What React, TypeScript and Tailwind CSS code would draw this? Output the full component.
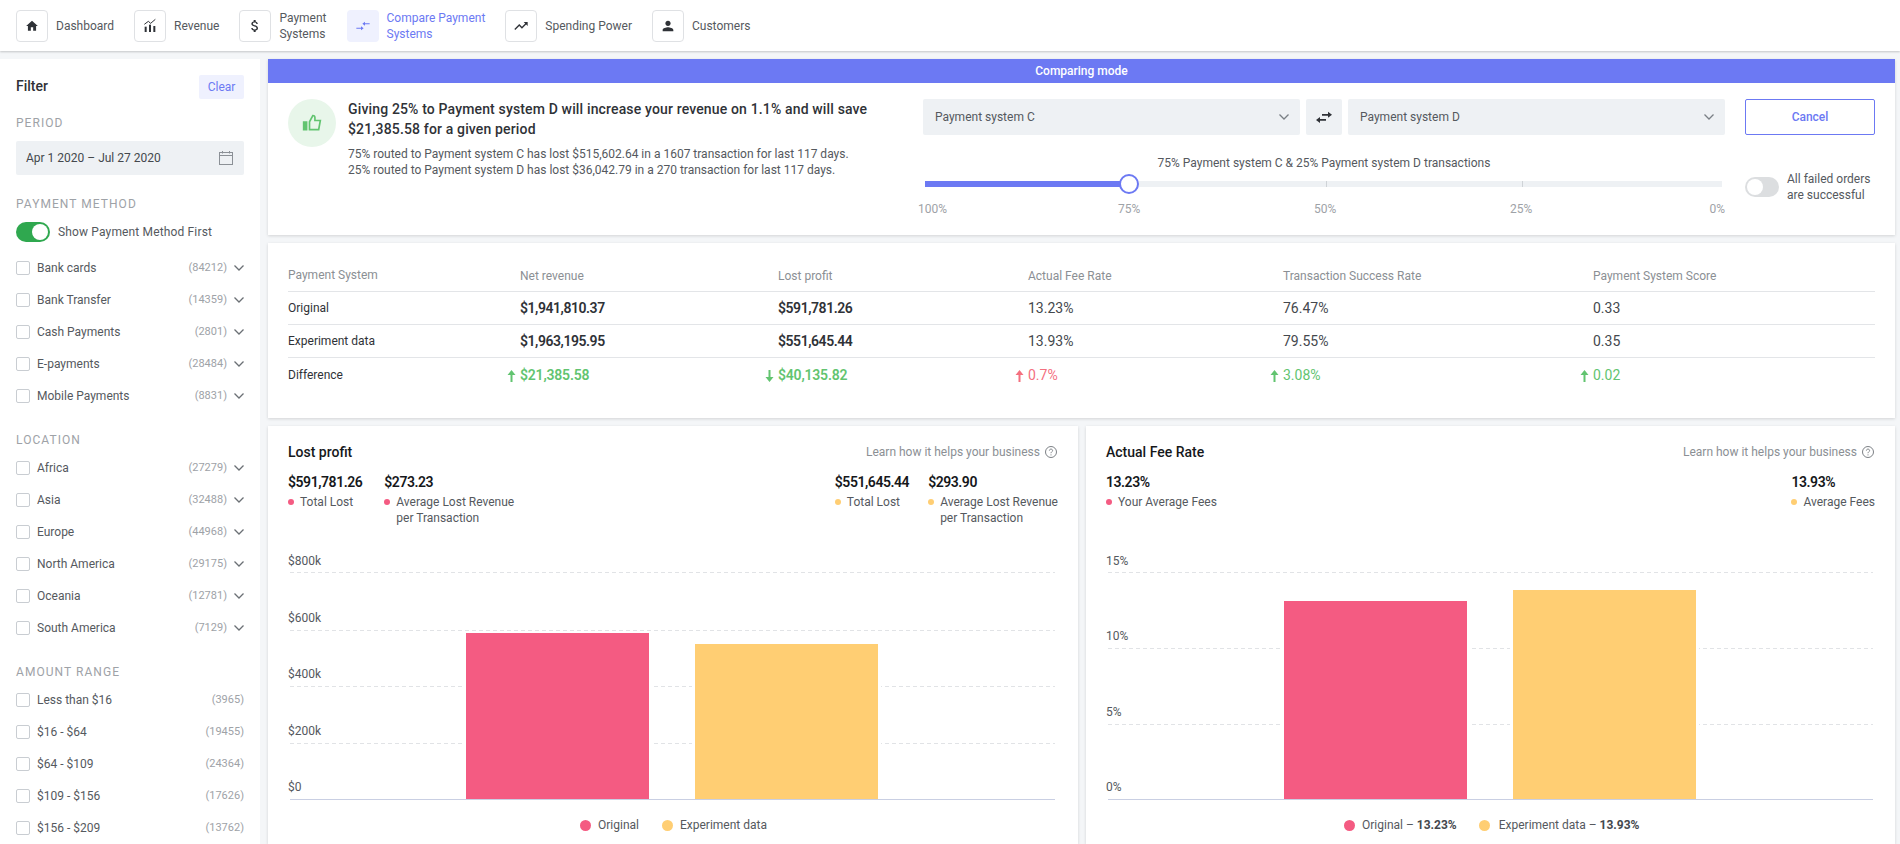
import React from "react";

const F = "[font-family:Roboto,'Liberation_Sans',sans-serif]";
const P = "#f45b82";
const Y = "#ffce73";
const IND = "#6c79f3";

const nav = [
  { t: ["Dashboard"], i: "home" },
  { t: ["Revenue"], i: "rev" },
  { t: ["Payment", "Systems"], i: "dollar" },
  { t: ["Compare Payment", "Systems"], i: "cmp", active: true },
  { t: ["Spending Power"], i: "trend" },
  { t: ["Customers"], i: "user" },
];

function NavIcon({ n }: { n: string }) {
  const c = n === "cmp" ? IND : "#2f3237";
  const size = n === "home" ? 14 : 16;
  return (
    <svg width={size} height={size} viewBox="0 0 24 24" fill={c}>
      {n === "home" && <path d="M10 20v-6h4v6h5v-8h3L12 3 2 12h3v8z" />}
      {n === "rev" && (
        <>
          <rect x="4" y="13" width="3" height="8" />
          <rect x="10.5" y="10" width="3" height="11" />
          <rect x="17" y="12" width="3" height="9" />
          <path d="M3.5 9.5l6-4.5 3.5 3 7-6" fill="none" stroke={c} strokeWidth="1.5" />
        </>
      )}
      {n === "dollar" && (
        <path d="M11.8 10.9c-2.27-.59-3-1.2-3-2.15 0-1.09 1.01-1.85 2.7-1.85 1.78 0 2.44.85 2.5 2.1h2.21c-.07-1.72-1.12-3.3-3.21-3.81V3h-3v2.16c-1.94.42-3.5 1.68-3.5 3.61 0 2.31 1.91 3.46 4.7 4.13 2.5.6 3 1.48 3 2.41 0 .69-.49 1.79-2.7 1.79-2.06 0-2.87-.92-2.98-2.1h-2.2c.12 2.19 1.76 3.42 3.68 3.83V21h3v-2.15c1.95-.37 3.5-1.5 3.5-3.55 0-2.84-2.43-3.81-4.7-4.4z" />
      )}
      {n === "cmp" && <path d="M22 8h-7V5.8L11 8.7l4 2.9V9.5h7zM2 14.5h7v-2.1l4 2.9-4 2.9v-2.2H2z" />}
      {n === "trend" && (
        <path d="M16 6l2.29 2.29-4.88 4.88-4-4L2 16.59 3.41 18l6-6 4 4 6.3-6.29L22 12V6z" />
      )}
      {n === "user" && (
        <path d="M12 12c2.21 0 4-1.79 4-4s-1.79-4-4-4-4 1.79-4 4 1.79 4 4 4zm0 2c-2.67 0-8 1.34-8 4v2h16v-2c0-2.66-5.33-4-8-4z" />
      )}
    </svg>
  );
}

function Chevron({ c = "#6b7075", w = 10 }: { c?: string; w?: number }) {
  return (
    <svg width={w} height="6" viewBox="0 0 10 6" fill="none" stroke={c} strokeWidth="1.3">
      <path d="M0.5 0.5L5 5L9.5 0.5" />
    </svg>
  );
}

function Row({ label, count, chev = true }: { label: string; count: string; chev?: boolean }) {
  return (
    <div className="flex h-8 items-center">
      <span className="h-3.5 w-3.5 shrink-0 rounded-[2px] border border-[#c9cdd2] bg-white" />
      <span className="ml-[7px] flex-1 text-xs text-[#55595e]">{label}</span>
      <span className="text-[11px] text-[#9ea2a7]">{count}</span>
      {chev && (
        <span className="ml-[7px] flex w-2.5 justify-center">
          <Chevron />
        </span>
      )}
    </div>
  );
}

function SecTitle({ children, cls }: { children: React.ReactNode; cls: string }) {
  return <div className={`text-xs leading-4 tracking-[1.05px] text-[#9ea2a7] ${cls}`}>{children}</div>;
}

function Sidebar() {
  return (
    <aside className="flex h-[785px] w-[260px] shrink-0 flex-col overflow-hidden bg-white px-4">
      <div className="mt-4 flex h-6 items-center justify-between">
        <span className="pb-[3px] text-sm font-medium text-[#2f3237]">Filter</span>
        <span className="flex h-6 w-[45px] items-center justify-center rounded-[2px] bg-[#eff1fe] text-xs text-[#6c79f3]">
          Clear
        </span>
      </div>
      <SecTitle cls="mt-4">PERIOD</SecTitle>
      <div className="mt-[10px] flex h-9 items-center justify-between rounded-[2px] bg-[#eef1f4] px-[10px]">
        <span className="text-xs text-[#44484d]">Apr 1 2020 – Jul 27 2020</span>
        <svg width="16" height="16" viewBox="0 0 16 16" fill="none" stroke="#8b9096" strokeWidth="1">
          <rect x="1.5" y="2.5" width="13" height="12" />
          <path d="M1.5 5.5h13M4.5 1v2.5M11.5 1v2.5" />
        </svg>
      </div>
      <SecTitle cls="mt-[21px]">PAYMENT METHOD</SecTitle>
      <div className="mt-[10px] flex h-5 items-center">
        <span className="flex h-5 w-[34px] items-center justify-end rounded-full bg-[#2fa84f] pr-0.5">
          <span className="h-4 w-4 rounded-full bg-white" />
        </span>
        <span className="ml-2 text-xs tracking-[0.15px] text-[#55595e]">Show Payment Method First</span>
      </div>
      <div className="mt-[10px]">
        <Row label="Bank cards" count="(84212)" />
        <Row label="Bank Transfer" count="(14359)" />
        <Row label="Cash Payments" count="(2801)" />
        <Row label="E-payments" count="(28484)" />
        <Row label="Mobile Payments" count="(8831)" />
      </div>
      <SecTitle cls="mt-[20px]">LOCATION</SecTitle>
      <div className="mt-[4px]">
        <Row label="Africa" count="(27279)" />
        <Row label="Asia" count="(32488)" />
        <Row label="Europe" count="(44968)" />
        <Row label="North America" count="(29175)" />
        <Row label="Oceania" count="(12781)" />
        <Row label="South America" count="(7129)" />
      </div>
      <SecTitle cls="mt-[20px]">AMOUNT RANGE</SecTitle>
      <div className="mt-[4px]">
        <Row label="Less than $16" count="(3965)" chev={false} />
        <Row label="$16 - $64" count="(19455)" chev={false} />
        <Row label="$64 - $109" count="(24364)" chev={false} />
        <Row label="$109 - $156" count="(17626)" chev={false} />
        <Row label="$156 - $209" count="(13762)" chev={false} />
      </div>
    </aside>
  );
}

function Select({ label }: { label: string }) {
  return (
    <div className="flex h-9 w-[377px] items-center justify-between rounded-[2px] bg-[#eef1f4] pl-3 pr-[11px]">
      <span className="text-xs text-[#55595e]">{label}</span>
      <Chevron c="#7a7f85" />
    </div>
  );
}

function Compare() {
  return (
    <section className="h-[176px] bg-white shadow-[0_1px_3px_rgba(0,0,0,0.14)]">
      <div className="flex h-6 items-center justify-center bg-[#6c79f3] text-xs font-medium text-white">
        Comparing mode
      </div>
      <div className="flex pl-5 pr-5 pt-4">
        <div className="flex w-[635px] shrink-0">
          <div className="flex h-12 w-12 shrink-0 items-center justify-center rounded-full bg-[#e8f6ea]">
            <svg width="20" height="20" viewBox="0 0 24 24" fill="none" stroke="#62c470" strokeWidth="2">
              <path d="M2 11h3.5v9H2z" fill="#62c470" />
              <path d="M9 20V10.5l4-7.5c1.6 0 2.5 1 2.5 2.5V9H22l-2 11H9z" />
            </svg>
          </div>
          <div className="ml-3">
            <div className="w-[550px] text-sm font-medium leading-5 tracking-[0.15px] text-[#2f3237]">
              Giving 25% to Payment system D will increase your revenue on 1.1% and will save $21,385.58 for a given
              period
            </div>
            <div className="mt-[7px] text-xs leading-4 text-[#55595e]">
              <div>75% routed to Payment system C has lost $515,602.64 in a 1607 transaction for last 117 days.</div>
              <div>25% routed to Payment system D has lost $36,042.79 in a 270 transaction for last 117 days.</div>
            </div>
          </div>
        </div>
        <div className="w-[802px] shrink-0">
          <div className="flex gap-1.5">
            <Select label="Payment system C" />
            <div className="flex h-9 w-9 items-center justify-center rounded-[2px] bg-[#eef1f4]">
              <svg width="16" height="16" viewBox="0 0 16 16" fill="#2f3237">
                <path d="M6 4.9h6V2.8l4 3-4 3V6.7H6z" />
                <path d="M10 10H4V7.9l-4 3 4 3v-2.1h6z" />
              </svg>
            </div>
            <Select label="Payment system D" />
          </div>
          <div className="mt-[20px] text-center text-xs leading-4 text-[#55595e]">
            75% Payment system C &amp; 25% Payment system D transactions
          </div>
          <div className="relative ml-[2px] mt-[10px] h-1.5 w-[797px] bg-[#eef1f4]">
            <div className="h-1.5 w-[204px] bg-[#6c79f3]" />
            <span className="absolute left-[401px] top-0 h-1.5 w-px bg-[#cfd3d7]" />
            <span className="absolute left-[597px] top-0 h-1.5 w-px bg-[#cfd3d7]" />
            <span className="absolute left-[194px] top-[-7px] h-5 w-5 rounded-full border-2 border-[#6c79f3] bg-white" />
          </div>
          <div className="relative mt-[14px] h-4 text-xs leading-4 text-[#9ea2a7]">
            <span className="absolute left-[-5px]">100%</span>
            <span className="absolute left-[195px]">75%</span>
            <span className="absolute left-[391px]">50%</span>
            <span className="absolute left-[587px]">25%</span>
            <span className="absolute right-0">0%</span>
          </div>
        </div>
        <div className="ml-5 w-[130px] shrink-0">
          <div className="flex h-9 w-[130px] items-center justify-center rounded-[2px] border border-[#6c79f3] text-xs font-medium text-[#6c79f3]">
            Cancel
          </div>
          <div className="mt-[36px] flex">
            <span className="mt-[6px] flex h-5 w-[34px] shrink-0 items-center rounded-full bg-[#dcdee0] pl-0.5">
              <span className="h-4 w-4 rounded-full bg-white" />
            </span>
            <span className="ml-2 text-xs leading-4 text-[#55595e]">
              All failed orders
              <br />
              are successful
            </span>
          </div>
        </div>
      </div>
    </section>
  );
}

const cols = [232, 258, 250, 255, 310];

function Arrow({ up, c }: { up: boolean; c: string }) {
  return (
    <svg className="absolute left-[-13px] top-[3px]" width="9" height="12" viewBox="0 0 9 12" fill={c}>
      {up ? <path d="M4.5 0L8.5 5H5.5V12H3.5V5H.5z" /> : <path d="M4.5 12L8.5 7H5.5V0H3.5V7H.5z" />}
    </svg>
  );
}

function TRow({ label, cells, head, border = true }: { label: string; cells: React.ReactNode[]; head?: boolean; border?: boolean }) {
  return (
    <div className={`flex h-[33px] items-center ${border ? "border-b border-[#e3e5e8]" : ""}`}>
      <div className={`w-[232px] shrink-0 text-xs ${head ? "text-[#8b8f94]" : "text-[#2f3237]"}`}>{label}</div>
      {cells.map((c, i) => (
        <div key={i} style={{ width: cols[i + 1] ?? 282 }} className="shrink-0">
          {c}
        </div>
      ))}
    </div>
  );
}

const H = ({ t }: { t: string }) => <span className="text-xs text-[#8b8f94]">{t}</span>;
const B = ({ t }: { t: string }) => <span className="text-sm font-semibold tracking-[-0.45px] text-[#2f3237]">{t}</span>;
const N = ({ t }: { t: string }) => <span className="text-sm text-[#44484d]">{t}</span>;
const D = ({ t, up, c, bold }: { t: string; up: boolean; c: string; bold?: boolean }) => (
  <span className={`relative text-sm ${bold ? "font-semibold tracking-[-0.2px]" : ""}`} style={{ color: c }}>
    <Arrow up={up} c={c} />
    {t}
  </span>
);

function Table() {
  const G = "#62c470";
  return (
    <section className="mt-2 h-[175px] bg-white pl-5 pr-5 pt-4 shadow-[0_1px_3px_rgba(0,0,0,0.14)]">
      <TRow head label="Payment System" cells={[<H t="Net revenue" />, <H t="Lost profit" />, <H t="Actual Fee Rate" />, <H t="Transaction Success Rate" />, <H t="Payment System Score" />]} />
      <TRow label="Original" cells={[<B t="$1,941,810.37" />, <B t="$591,781.26" />, <N t="13.23%" />, <N t="76.47%" />, <N t="0.33" />]} />
      <TRow label="Experiment data" cells={[<B t="$1,963,195.95" />, <B t="$551,645.44" />, <N t="13.93%" />, <N t="79.55%" />, <N t="0.35" />]} />
      <TRow border={false} label="Difference" cells={[<D t="$21,385.58" up c={G} bold />, <D t="$40,135.82" up={false} c={G} bold />, <D t="0.7%" up c="#f4707f" />, <D t="3.08%" up c={G} />, <D t="0.02" up c={G} />]} />
    </section>
  );
}

function Dot({ c }: { c: string }) {
  return <span className="mt-[5px] h-1.5 w-1.5 shrink-0 rounded-full" style={{ background: c }} />;
}

function Stat({ v, label, c }: { v: string; label: React.ReactNode; c: string }) {
  return (
    <div>
      <div className="text-sm font-semibold leading-4 tracking-[-0.45px] text-[#16181b]">{v}</div>
      <div className="mt-1 flex gap-1.5 text-xs leading-4 text-[#55595e]">
        <Dot c={c} />
        <span>{label}</span>
      </div>
    </div>
  );
}

function ChartSvg({ grid, bars, labels }: { grid: number[]; bars: number[]; labels: [string, number][] }) {
  return (
    <svg width="772" height="250" viewBox="0 0 772 250" className="-ml-0.5 block">
      {grid.map((y) => (
        <line key={y} x1="4" x2="769" y1={y + 0.5} y2={y + 0.5} stroke="#e1e3e6" strokeDasharray="4 3" />
      ))}
      <line x1="4" x2="769" y1="247.5" y2="247.5" stroke="#c9cfe3" />
      <rect x="180" y={bars[0]} width="183" height={247 - bars[0]} fill={P} />
      <rect x="409" y={bars[1]} width="183" height={247 - bars[1]} fill={Y} />
      {[180, 409].map((x, i) =>
        grid
          .filter((g) => g > bars[i])
          .map((g) => (
            <g key={`${x}${g}`}>
              <rect x={x - 3} y={g} width="3" height="1" fill="#fff" />
              <rect x={x + 183} y={g} width="3" height="1" fill="#fff" />
            </g>
          ))
      )}
      {labels.map(([t, y]) => (
        <text key={t} x="2" y={y} fontSize="12" fill="#55595e" fontFamily="Roboto, sans-serif">
          {t}
        </text>
      ))}
    </svg>
  );
}

function LegendDot({ c }: { c: string }) {
  return <span className="block h-[11px] w-[11px] rounded-full" style={{ background: c }} />;
}

function Learn() {
  return (
    <span className="flex items-center gap-1 text-xs text-[#8b8f94]">
      Learn how it helps your business
      <svg width="14" height="14" viewBox="0 0 14 14" fill="none" stroke="#7d8186">
        <circle cx="7" cy="7" r="5.5" />
        <path d="M5.4 5.6c0-2 3.2-2 3.2 0 0 1.2-1.6 1.2-1.6 2.6M7 9.4v1" />
      </svg>
    </span>
  );
}

function Card({ title, left, right, chart, legend, w }: { title: string; left: React.ReactNode; right: React.ReactNode; chart: React.ReactNode; legend: React.ReactNode; w: string }) {
  return (
    <section className={`h-[418px] ${w} shrink-0 bg-white px-5 pt-[18px] shadow-[0_1px_3px_rgba(0,0,0,0.14)]`}>
      <div className="flex h-4 items-center justify-between">
        <span className="text-sm font-medium text-[#16181b]">{title}</span>
        <Learn />
      </div>
      <div className="mt-[14px] flex h-[78px] justify-between">
        {left}
        {right}
      </div>
      {chart}
      {legend}
    </section>
  );
}

export default function App() {
  return (
    <div className={`h-[844px] w-[1900px] overflow-hidden bg-[#f4f6f8] ${F}`}>
      <header className="flex h-[51px] items-center gap-5 bg-white px-4 shadow-[0_1px_2px_rgba(0,0,0,0.2)]">
        {nav.map((n) => (
          <div key={n.t[0]} className="flex items-center gap-2">
            <span
              className={`flex h-8 w-8 items-center justify-center rounded ${
                n.active ? "bg-[#eff1fe]" : "border border-[#dfe1e4] bg-white"
              }`}
            >
              <NavIcon n={n.i} />
            </span>
            <span className={`text-xs leading-4 ${n.active ? "text-[#6c79f3]" : "text-[#55595e]"}`}>
              {n.t.map((l) => (
                <div key={l}>{l}</div>
              ))}
            </span>
          </div>
        ))}
      </header>
      <div className="mt-2 flex gap-2">
        <Sidebar />
        <main className="w-[1627px] shrink-0">
          <Compare />
          <Table />
          <div className="mt-2 flex gap-2">
            <Card
              w="w-[810px]"
              title="Lost profit"
              left={
                <div className="flex gap-[22px]">
                  <Stat v="$591,781.26" c={P} label="Total Lost" />
                  <Stat v="$273.23" c={P} label={<>Average Lost Revenue<br />per Transaction</>} />
                </div>
              }
              right={
                <div className="flex gap-[19px]">
                  <Stat v="$551,645.44" c={Y} label="Total Lost" />
                  <Stat v="$293.90" c={Y} label={<>Average Lost Revenue<br />per Transaction</>} />
                </div>
              }
              chart={
                <ChartSvg
                  grid={[20, 78, 134, 191]}
                  bars={[81, 92]}
                  labels={[["$800k", 13], ["$600k", 70], ["$400k", 126], ["$200k", 183], ["$0", 239]]}
                />
              }
              legend={
                <div className="ml-[292px] mt-[15px] flex items-center text-xs leading-4 text-[#55595e]">
                  <LegendDot c={P} />
                  <span className="ml-[7px]">Original</span>
                  <span className="ml-[23px]"><LegendDot c={Y} /></span>
                  <span className="ml-[7px]">Experiment data</span>
                </div>
              }
            />
            <Card
              w="w-[809px]"
              title="Actual Fee Rate"
              left={<Stat v="13.23%" c={P} label="Your Average Fees" />}
              right={<Stat v="13.93%" c={Y} label="Average Fees" />}
              chart={
                <ChartSvg
                  grid={[20, 96, 172]}
                  bars={[49, 38]}
                  labels={[["15%", 13], ["10%", 88], ["5%", 164], ["0%", 239]]}
                />
              }
              legend={
                <div className="ml-[238px] mt-[15px] flex items-center text-xs leading-4 text-[#55595e]">
                  <LegendDot c={P} />
                  <span className="ml-[7px]">Original – <b className="font-bold text-[#44484d]">13.23%</b></span>
                  <span className="ml-[22px]"><LegendDot c={Y} /></span>
                  <span className="ml-[9px]">Experiment data – <b className="font-bold text-[#44484d]">13.93%</b></span>
                </div>
              }
            />
          </div>
        </main>
      </div>
    </div>
  );
}
